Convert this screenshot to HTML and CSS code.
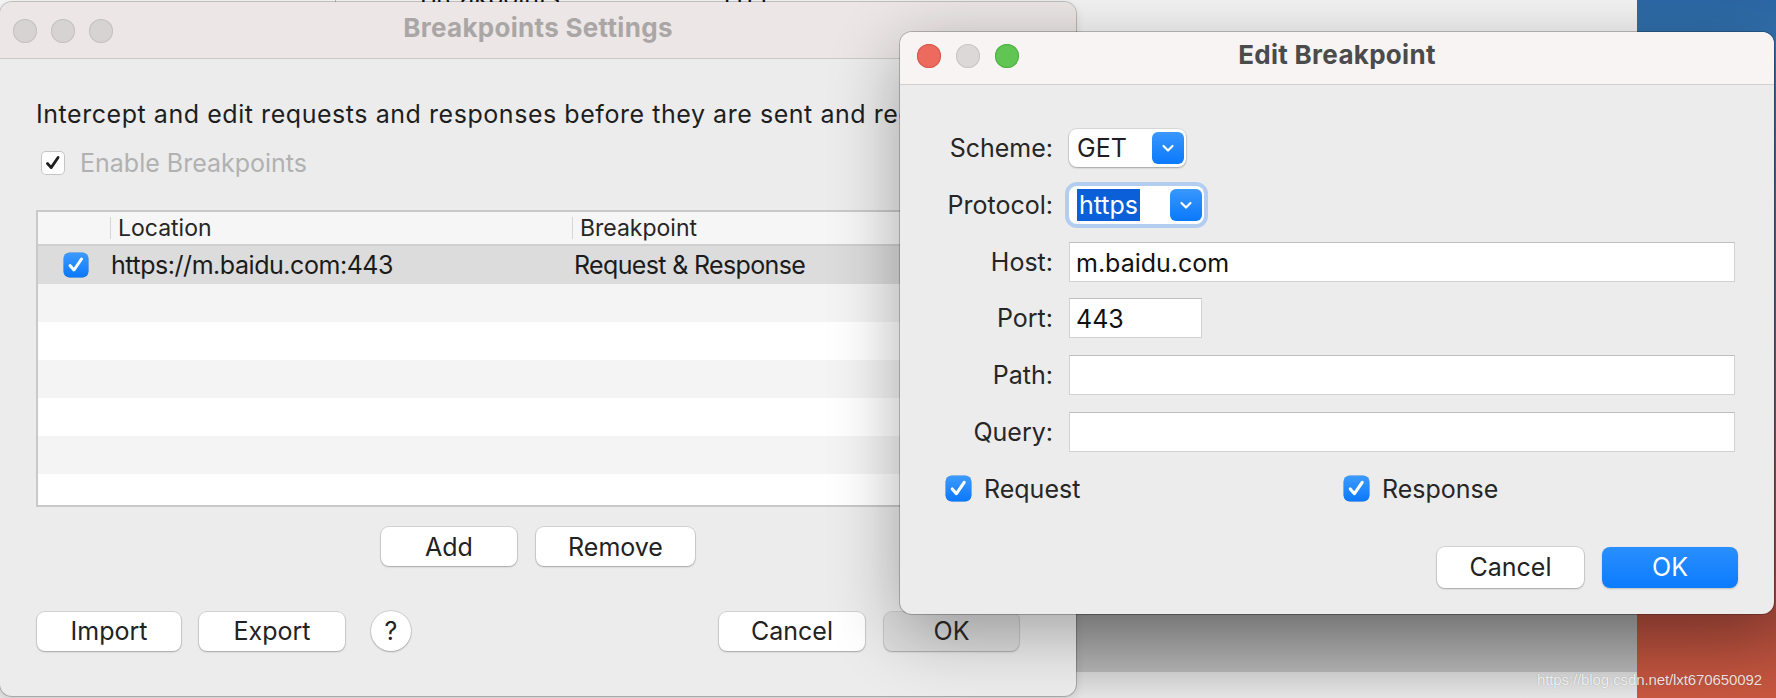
FILE: index.html
```html
<!DOCTYPE html>
<html lang="en">
<head>
    <meta charset="UTF-8">
    <title>Breakpoints Settings</title>
    <link rel="stylesheet" href="styles.css">
</head>
<body>
<div class="desktop">
    <div class="wallpaper"></div>

    <!-- window behind both dialogs -->
    <div class="backwin">
        <div class="back-top">
            <span class="back-col"></span>
            <span class="back-text">Breakpoints</span>
            <span class="back-text version">1.8.1</span>
        </div>
        <div class="back-main"></div>
        <div class="back-band"></div>
        <div class="back-foot"></div>
    </div>

    <!-- Breakpoints Settings (inactive) -->
    <section class="window settings">
        <header class="titlebar">
            <div class="lights"><i></i><i></i><i></i></div>
            <h1>Breakpoints Settings</h1>
        </header>
        <div class="body">
            <p class="intro">Intercept and edit requests and responses before they are sent and received.</p>
            <label class="check disabled">
                <span class="box plain">
                    <svg width="26" height="26" viewBox="0 0 26 26"><path d="M7 13.5l4 4.5 7.5-11" fill="none" stroke="#1e1e1e" stroke-width="3" stroke-linecap="round" stroke-linejoin="round"/></svg>
                </span>
                Enable Breakpoints
            </label>

            <div class="table">
                <div class="row head">
                    <div class="c1"></div>
                    <div class="c2">Location</div>
                    <div class="c3">Breakpoint</div>
                </div>
                <div class="row selected">
                    <div class="c1">
                        <svg class="bluebox" width="26" height="26" viewBox="0 0 26 26"><rect x="0.5" y="0.5" width="25" height="25" rx="6" fill="url(#blue)"/><path d="M7 13.5l4 4.5 7.5-11" fill="none" stroke="#fff" stroke-width="3" stroke-linecap="round" stroke-linejoin="round"/></svg>
                    </div>
                    <div class="c2 url">https://m.baidu.com:443</div>
                    <div class="c3 kind">Request &amp; Response</div>
                </div>
                <div class="row"></div>
                <div class="row"></div>
                <div class="row"></div>
                <div class="row"></div>
                <div class="row"></div>
                <div class="row"></div>
            </div>

            <div class="mid-buttons">
                <button class="btn w-add">Add</button>
                <button class="btn w-remove">Remove</button>
            </div>

            <div class="footer">
                <button class="btn w-import">Import</button>
                <button class="btn w-export">Export</button>
                <button class="help">?</button>
                <span class="spacer"></span>
                <button class="btn w-cancel">Cancel</button>
                <button class="btn dim w-ok">OK</button>
            </div>
        </div>
    </section>

    <!-- Edit Breakpoint (active) -->
    <section class="window dialog">
        <header class="titlebar active">
            <div class="lights"><i class="red"></i><i></i><i class="green"></i></div>
            <h1>Edit Breakpoint</h1>
        </header>
        <div class="body">
            <div class="form">
                <label>Scheme:</label>
                <div class="popup scheme">
                    <span>GET</span>
                    <span class="arrow"><svg width="14" height="10" viewBox="0 0 14 10"><path d="M2.5 3l4.5 4.5 4.5-4.5" fill="none" stroke="#fff" stroke-width="2.2" stroke-linecap="round" stroke-linejoin="round"/></svg></span>
                </div>

                <label>Protocol:</label>
                <div class="popup protocol focus">
                    <span class="sel">https</span>
                    <span class="arrow"><svg width="14" height="10" viewBox="0 0 14 10"><path d="M2.5 3l4.5 4.5 4.5-4.5" fill="none" stroke="#fff" stroke-width="2.2" stroke-linecap="round" stroke-linejoin="round"/></svg></span>
                </div>

                <label>Host:</label>
                <div class="field">m.baidu.com</div>

                <label>Port:</label>
                <div class="field port">443</div>

                <label>Path:</label>
                <div class="field"></div>

                <label>Query:</label>
                <div class="field"></div>
            </div>

            <div class="checks">
                <label class="check">
                    <svg class="bluebox" width="27" height="27" viewBox="0 0 26 26"><rect x="0.5" y="0.5" width="25" height="25" rx="6" fill="url(#blue)"/><path d="M7 13.5l4 4.5 7.5-11" fill="none" stroke="#fff" stroke-width="3" stroke-linecap="round" stroke-linejoin="round"/></svg>
                    Request
                </label>
                <label class="check">
                    <svg class="bluebox" width="27" height="27" viewBox="0 0 26 26"><rect x="0.5" y="0.5" width="25" height="25" rx="6" fill="url(#blue)"/><path d="M7 13.5l4 4.5 7.5-11" fill="none" stroke="#fff" stroke-width="3" stroke-linecap="round" stroke-linejoin="round"/></svg>
                    Response
                </label>
            </div>

            <div class="actions">
                <button class="btn w-cancel2">Cancel</button>
                <button class="btn primary w-ok2">OK</button>
            </div>
        </div>
    </section>

    <div class="watermark">https://blog.csdn.net/lxt670650092</div>

    <svg width="0" height="0" class="defs">
        <defs>
            <linearGradient id="blue" x1="0" y1="0" x2="0" y2="1">
                <stop offset="0" stop-color="#3d9bff"/>
                <stop offset="1" stop-color="#0a78fb"/>
            </linearGradient>
        </defs>
    </svg>
</div>
</body>
</html>
```

FILE: styles.css
```css
body {
    margin: 0;
    width: 1776px;
    height: 698px;
    overflow: hidden;
    font-family: Inter, "Noto Sans", sans-serif;
    color: #222;
}
.desktop {
    position: relative;
    width: 1776px;
    height: 698px;
    overflow: hidden;
    background: #f3f3f3;
}
.defs {
    position: absolute;
}
.wallpaper {
    position: absolute;
    left: 1637px;
    top: 0;
    width: 139px;
    height: 698px;
    background: linear-gradient(to bottom, #2b68a5 0, #3371ad 40px, #5f5f8a 300px, #a8493a 614px, #c8573f 698px);
}

/* back window */
.backwin {
    position: absolute;
    left: 0;
    top: 0;
    width: 1637px;
    height: 698px;
    display: flex;
    flex-direction: column;
    background: #f4f4f4;
}
.back-top {
    flex: none;
    height: 32px;
    display: flex;
    align-items: flex-start;
    border-bottom: 1px solid #cfcfcf;
    font-size: 25px;
    color: #111;
}
.back-col {
    width: 335px;
    height: 100%;
    border-right: 1px solid #bbb;
}
.back-text {
    margin-left: 84px;
    margin-top: -18px;
}
.back-text.version {
    margin-left: 160px;
}
.back-main {
    flex: 1;
}
.back-band {
    flex: none;
    height: 58px;
    background: linear-gradient(#9c9c9c, #b2b2b2);
    border-top: 1px solid #888;
    box-sizing: border-box;
}
.back-foot {
    flex: none;
    height: 26px;
    background: linear-gradient(#d2d2d2, #e6e6e6);
}

/* windows */
.window {
    position: absolute;
    border-radius: 12px;
    background: #ececec;
    overflow: hidden;
    display: flex;
    flex-direction: column;
}
.settings {
    left: 0;
    top: 2px;
    width: 1076px;
    height: 694px;
    box-shadow: 0 0 0 1px rgba(0,0,0,0.2), 0 3px 10px rgba(0,0,0,0.12);
}
.dialog {
    left: 900px;
    top: 32px;
    width: 874px;
    height: 582px;
    box-shadow: 0 0 0 1px rgba(0,0,0,0.22), 0 18px 70px rgba(0,0,0,0.32);
}
.titlebar {
    position: relative;
    height: 57px;
    flex: none;
    display: flex;
    align-items: center;
    padding-bottom: 4px;
    box-sizing: border-box;
    background: #ece6e6;
    border-bottom: 1px solid #cdc9c9;
}
.titlebar.active {
    height: 53px;
    padding-bottom: 6px;
    background: #f7f4f3;
    border-bottom-color: #d3d0cf;
}
.lights {
    display: flex;
    gap: 14px;
    padding-left: 13px;
    margin-top: 5px;
}
.lights i {
    width: 24px;
    height: 24px;
    border-radius: 50%;
    background: #d8d3d3;
    box-shadow: inset 0 0 0 1px #c6c0c0;
}
.active .lights {
    padding-left: 17px;
    gap: 15px;
    margin-top: 2px;
}
.active .lights i {
    background: #dcd8d7;
    box-shadow: inset 0 0 0 1px #c9c5c4;
}
.lights i.red {
    background: #ed6a5e;
    box-shadow: inset 0 0 0 1px #d6584d;
}
.lights i.green {
    background: #61c554;
    box-shadow: inset 0 0 0 1px #4fae43;
}
.titlebar h1 {
    position: absolute;
    left: 0;
    right: 0;
    top: 10px;
    text-align: center;
    margin: 0;
    font-size: 26px;
    line-height: 32px;
    font-weight: 700;
    letter-spacing: 0.3px;
    color: #aba6a6;
    pointer-events: none;
}
.titlebar.active h1 {
    top: 7px;
    color: #4b4b4b;
}

/* settings body */
.settings .body {
    padding: 0 36px;
    font-size: 25px;
}
.intro {
    margin: 40px 0 0;
    line-height: 30px;
    white-space: nowrap;
    letter-spacing: 0.55px;
    color: #1e1e1e;
}
.check {
    display: flex;
    align-items: center;
    line-height: 30px;
}
.check.disabled {
    margin-top: 19px;
    color: #b1b1b1;
}
.box.plain {
    width: 24px;
    height: 24px;
    margin-left: 5px;
    margin-right: 15px;
    border-radius: 5px;
    background: #fff;
    box-shadow: inset 0 0 0 1px #c4c4c4;
    display: flex;
    align-items: center;
    justify-content: center;
}
.table {
    margin-top: 32px;
    width: 1004px;
    height: 297px;
    box-sizing: border-box;
    border: 2px solid #c9c9c9;
    background: #fff;
    overflow: hidden;
}
.row {
    display: flex;
    height: 38px;
    align-items: center;
}
.row:nth-child(odd) {
    background: #f4f4f4;
}
.row.head {
    height: 32px;
    background: #f6f6f6;
    border-bottom: 2px solid #cfcfcf;
    font-size: 23px;
    color: #262626;
}
.row.selected {
    background: #dcdcdc;
}
.c1 {
    width: 72px;
    flex: none;
    display: flex;
    justify-content: center;
    padding-left: 4px;
    box-sizing: border-box;
}
.c2 {
    width: 462px;
    flex: none;
    box-sizing: border-box;
}
.c3 {
    flex: 1;
}
.head .c2,
.head .c3 {
    height: 22px;
    line-height: 22px;
    padding-left: 7px;
    border-left: 1px solid #d6d6d6;
}
.selected .c2 {
    padding-left: 1px;
    color: #1b1b1b;
}
.selected .c3 {
    padding-left: 2px;
    color: #1b1b1b;
}
.url {
    letter-spacing: -0.45px;
}
.kind {
    letter-spacing: -0.65px;
}
.bluebox {
    display: block;
    filter: drop-shadow(0 0.5px 0.5px rgba(0,0,0,0.25));
}

/* buttons */
.btn {
    height: 39px;
    padding: 0;
    border: none;
    border-radius: 8px;
    background: #fff;
    font-family: inherit;
    font-size: 25px;
    color: #222;
    box-shadow: 0 0 0 1px rgba(0,0,0,0.1), 0 1px 2px rgba(0,0,0,0.22);
}
.btn.dim {
    background: #dedede;
    color: #2a2a2a;
}
.btn.primary {
    background: linear-gradient(#2a8ffe, #0b7bfd);
    color: #fff;
    box-shadow: 0 1px 2px rgba(0,0,0,0.2);
}
.mid-buttons {
    margin-top: 20px;
    display: flex;
    justify-content: center;
    gap: 19px;
}
.footer {
    margin-top: 45px;
    display: flex;
    align-items: center;
    padding-left: 1px;
    padding-right: 21px;
}
.footer .w-export {
    margin-left: 18px;
}
.footer .w-ok {
    margin-left: 19px;
}
.w-add { width: 136px; }
.w-remove { width: 159px; }
.w-import { width: 144px; }
.w-export { width: 146px; }
.w-cancel { width: 146px; }
.w-ok { width: 135px; }
.help {
    width: 40px;
    height: 40px;
    margin-left: 26px;
    padding: 0;
    border: none;
    border-radius: 50%;
    background: #fff;
    font-family: inherit;
    font-size: 25px;
    color: #222;
    box-shadow: 0 0 0 1px rgba(0,0,0,0.1), 0 1px 2px rgba(0,0,0,0.22);
}
.spacer {
    flex: 1;
}

/* edit dialog body */
.dialog .body {
    font-size: 25px;
    color: #262626;
}
.form {
    display: grid;
    grid-template-columns: 153px 1fr;
    grid-auto-rows: 40px;
    column-gap: 16px;
    row-gap: 16.8px;
    padding: 43px 39px 0 0;
    align-items: center;
}
.form label {
    text-align: right;
}
.popup {
    height: 38px;
    display: flex;
    align-items: center;
    justify-content: space-between;
    box-sizing: border-box;
    padding: 0 2px 0 8px;
    border-radius: 8px;
    background: #fff;
    box-shadow: 0 0 0 1px rgba(0,0,0,0.08), 0 1px 2px rgba(0,0,0,0.25);
    color: #1e1e1e;
}
.popup.scheme { width: 117px; }
.popup.protocol { width: 135px; }
.popup.focus {
    box-shadow: 0 0 0 4px #b3cdf1, 0 1px 2px rgba(0,0,0,0.25);
}
.popup .sel {
    background: #0b5fd8;
    color: #fff;
    padding: 0 2px;
    line-height: 32px;
}
.arrow {
    width: 32px;
    height: 32px;
    border-radius: 6px;
    background: linear-gradient(#3a97fd, #0a79fb);
    display: flex;
    align-items: center;
    justify-content: center;
}
.field {
    height: 40px;
    box-sizing: border-box;
    padding-left: 6px;
    line-height: 40px;
    background: #fff;
    border: 1px solid #d2d2d2;
    border-top-color: #bdbdbd;
    color: #111;
}
.field.port {
    width: 133px;
}
.checks {
    margin-top: 22px;
    padding-left: 45px;
    display: grid;
    grid-template-columns: 398px auto;
}
.checks .check .bluebox {
    margin-right: 12px;
}
.actions {
    margin-top: 43px;
    display: flex;
    justify-content: flex-end;
    gap: 18px;
    padding-right: 36px;
}
.actions .btn {
    height: 41px;
}
.w-cancel2 { width: 147px; }
.w-ok2 { width: 136px; }

.watermark {
    position: absolute;
    right: 14px;
    bottom: 10px;
    font-family: "Liberation Sans", Arial, sans-serif;
    font-size: 15px;
    letter-spacing: -0.1px;
    color: rgba(255,255,255,0.85);
    text-shadow: 0 0 1px rgba(0,0,0,0.3);
}
```
